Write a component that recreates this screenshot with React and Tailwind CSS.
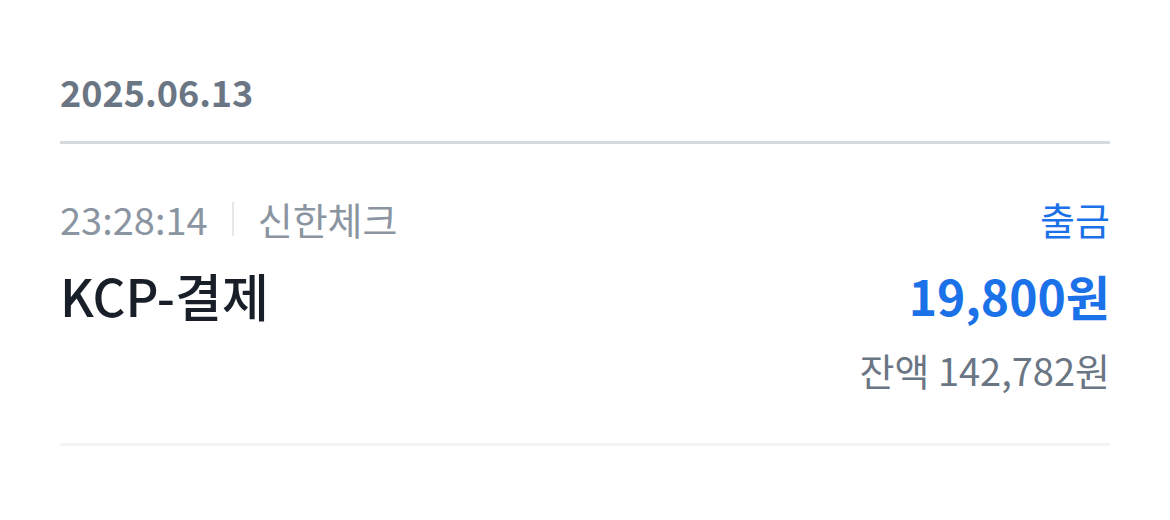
export default function App() {
  return (
    <div
      className="w-[1170px] h-[520px] bg-white px-[60px] pt-[66px]"
      style={{ fontFamily: '"Noto Sans CJK KR", "Noto Sans", sans-serif' }}
    >
      <div className="pb-[25px] border-b-[3px] border-[#d5dadf]">
        <h2 className="text-[36px] leading-[50px] font-bold text-[#6b7684]">2025.06.13</h2>
      </div>
      <div className="flex justify-between pt-[50px] pb-[48px] border-b-[3px] border-[#f2f4f6]">
        <div className="flex flex-col">
          <div className="flex items-center text-[38px] leading-[50px] text-[#8b95a1]">
            <span>23:28:14</span>
            <span className="mx-[24px] h-[34px] w-[2px] bg-[#e5e8eb]" />
            <span>신한체크</span>
          </div>
          <p className="mt-[21px] text-[51px] leading-[60px] font-medium text-[#191f28]">KCP-결제</p>
        </div>
        <div className="flex flex-col items-end">
          <span className="text-[38px] leading-[50px] text-[#1b72e8]">출금</span>
          <span className="mt-[21px] text-[48px] leading-[60px] font-bold text-[#1b72e8]">19,800원</span>
          <span className="mt-[20px] text-[38px] leading-[50px] text-[#6b7684]">잔액 142,782원</span>
        </div>
      </div>
    </div>
  );
}
